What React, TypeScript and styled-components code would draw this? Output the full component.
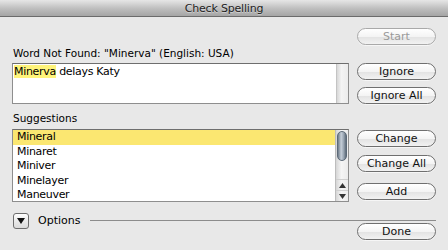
import React from "react"
import styled, { createGlobalStyle } from "styled-components"

const GlobalStyle = createGlobalStyle`
  html, body {
    margin: 0;
    padding: 0;
    background: #e8e8e8;
  }
  * {
    box-sizing: border-box;
  }
`

const Window = styled.div`
  display: flex;
  flex-direction: column;
  width: 448px;
  height: 250px;
  overflow: hidden;
  background: #e8e8e8;
  font-family: "Lucida Grande", "DejaVu Sans", sans-serif;
  color: #000;
`

const TitleBar = styled.div`
  display: flex;
  justify-content: center;
  align-items: center;
  height: 17px;
  background: linear-gradient(#e6e6e6, #bdbdbd 55%, #a5a5a5);
  border-bottom: 1px solid #6b6b6b;
  font-size: 11px;
  letter-spacing: -0.2px;
  color: #1e1e1e;
  text-shadow: 0 1px 0 rgba(255, 255, 255, 0.4);
`

const Body = styled.div`
  display: grid;
  grid-template-columns: 337px 79px;
  column-gap: 8px;
  padding: 11px 12px 0 12px;
`

const Label = styled.div`
  grid-column: 1 / span 2;
  font-size: 10.5px;
  height: 18px;
  line-height: 16px;
  padding-left: 1px;
  white-space: nowrap;
`

const ButtonColumn = styled.div<{ $gap: number; $top?: number }>`
  display: flex;
  flex-direction: column;
  gap: ${(p) => p.$gap}px;
  padding-top: ${(p) => p.$top ?? 0}px;
`

const PillButton = styled.div<{ $disabled?: boolean; $push?: number }>`
  display: flex;
  justify-content: center;
  align-items: center;
  width: 79px;
  height: 17px;
  margin-top: ${(p) => p.$push ?? 0}px;
  border-radius: 9px;
  border: 1px solid ${(p) => (p.$disabled ? "#a9a9a9" : "#6f6f6f")};
  background: linear-gradient(#ffffff, #f4f4f4 50%, #e2e2e2 51%, #f2f2f2);
  font-size: 11px;
  color: ${(p) => (p.$disabled ? "#9a9a9a" : "#111")};
  box-shadow: 0 1px 0 rgba(255, 255, 255, 0.6);
`

const TopRight = styled.div`
  grid-column: 2;
  display: flex;
  justify-content: flex-end;
`

const TextBox = styled.div`
  display: flex;
  height: 41px;
  border: 1px solid #8e8e8e;
  border-top-color: #6e6e6e;
  background: #fff;
`

const TextContent = styled.div`
  flex: 1;
  padding: 1px 0 0 1px;
  font-size: 11px;
  letter-spacing: -0.3px;
  line-height: 14px;
`

const Mark = styled.span`
  background: #fff47a;
`

const EmptyTrack = styled.div`
  width: 12px;
  background: linear-gradient(to right, #d7d7d7, #f4f4f4 40%, #ececec);
  border-left: 1px solid #c4c4c4;
`

const SuggestLabel = styled(Label)`
  margin-top: 4px;
  height: 21px;
  line-height: 21px;
`

const ListBox = styled.div`
  display: flex;
  height: 73px;
  border: 1px solid #8e8e8e;
  border-top-color: #6e6e6e;
  background: #fff;
`

const Rows = styled.div`
  flex: 1;
  display: flex;
  flex-direction: column;
`

const Row = styled.div<{ $selected?: boolean }>`
  height: 14.5px;
  line-height: 14.5px;
  padding-left: 4px;
  font-size: 11px;
  letter-spacing: -0.3px;
  background: ${(p) => (p.$selected ? "#fbe771" : "transparent")};
`

const ScrollBar = styled.div`
  display: flex;
  flex-direction: column;
  width: 13px;
  background: linear-gradient(to right, #d6d6d6, #f5f5f5 45%, #ebebeb);
  border-left: 1px solid #bdbdbd;
`

const Thumb = styled.div`
  margin: 1px 1px 0 1px;
  height: 30px;
  border-radius: 6px;
  border: 1px solid #5d6a78;
  background: linear-gradient(to right, #6f7c8a, #c5ced8 40%, #9aa6b3 70%, #5e6b79);
`

const Spacer = styled.div`
  flex: 1;
`

const Arrow = styled.div`
  display: flex;
  justify-content: center;
  align-items: center;
  height: 11px;
  border-top: 1px solid #cfcfcf;
`

const Footer = styled.div`
  display: grid;
  grid-template-columns: 16px auto 1fr;
  grid-template-rows: 10px 6px 11px;
  column-gap: 9px;
  padding: 11px 12px 0 13px;
`

const Disclosure = styled.div`
  grid-row: 1 / span 2;
  display: flex;
  justify-content: center;
  align-items: center;
  width: 16px;
  height: 16px;
  border-radius: 3px;
  border: 1px solid #6d6d6d;
  background: linear-gradient(#ffffff, #eaeaea 50%, #dadada);
`

const OptionsText = styled.div`
  grid-row: 1 / span 2;
  font-size: 11px;
  line-height: 16px;
`

const Rule = styled.div`
  grid-column: 3;
  grid-row: 1;
  margin: 7px 0 0 1px;
  border-top: 1px solid #8c8c8c;
  align-self: start;
`

const DoneWrap = styled.div`
  grid-column: 3;
  grid-row: 2 / span 2;
  display: flex;
  justify-content: flex-end;
`

const suggestions = ["Mineral", "Minaret", "Miniver", "Minelayer", "Maneuver"]

function App() {
  return (
    <Window>
      <GlobalStyle />
      <TitleBar>Check Spelling</TitleBar>
      <Body>
        <TopRight>
          <PillButton $disabled>Start</PillButton>
        </TopRight>
        <Label>Word Not Found: "Minerva" (English: USA)</Label>
        <TextBox>
          <TextContent>
            <Mark>Minerva</Mark> delays Katy
          </TextContent>
          <EmptyTrack />
        </TextBox>
        <ButtonColumn $gap={7}>
          <PillButton>Ignore</PillButton>
          <PillButton>Ignore All</PillButton>
        </ButtonColumn>
        <SuggestLabel>Suggestions</SuggestLabel>
        <ListBox>
          <Rows>
            {suggestions.map((s, i) => (
              <Row key={s} $selected={i === 0}>
                {s}
              </Row>
            ))}
          </Rows>
          <ScrollBar>
            <Thumb />
            <Spacer />
            <Arrow>
              <svg width="7" height="5" viewBox="0 0 7 5">
                <path d="M3.5 0 L7 5 L0 5 Z" fill="#333" />
              </svg>
            </Arrow>
            <Arrow>
              <svg width="7" height="5" viewBox="0 0 7 5">
                <path d="M0 0 L7 0 L3.5 5 Z" fill="#333" />
              </svg>
            </Arrow>
          </ScrollBar>
        </ListBox>
        <ButtonColumn $gap={8} $top={1}>
          <PillButton>Change</PillButton>
          <PillButton>Change All</PillButton>
          <PillButton $push={3}>Add</PillButton>
        </ButtonColumn>
      </Body>
      <Footer>
        <Disclosure>
          <svg width="8" height="6" viewBox="0 0 8 6">
            <path d="M0 0 L8 0 L4 6 Z" fill="#111" />
          </svg>
        </Disclosure>
        <OptionsText>Options</OptionsText>
        <Rule />
        <DoneWrap>
          <PillButton>Done</PillButton>
        </DoneWrap>
      </Footer>
    </Window>
  )
}

export default App
